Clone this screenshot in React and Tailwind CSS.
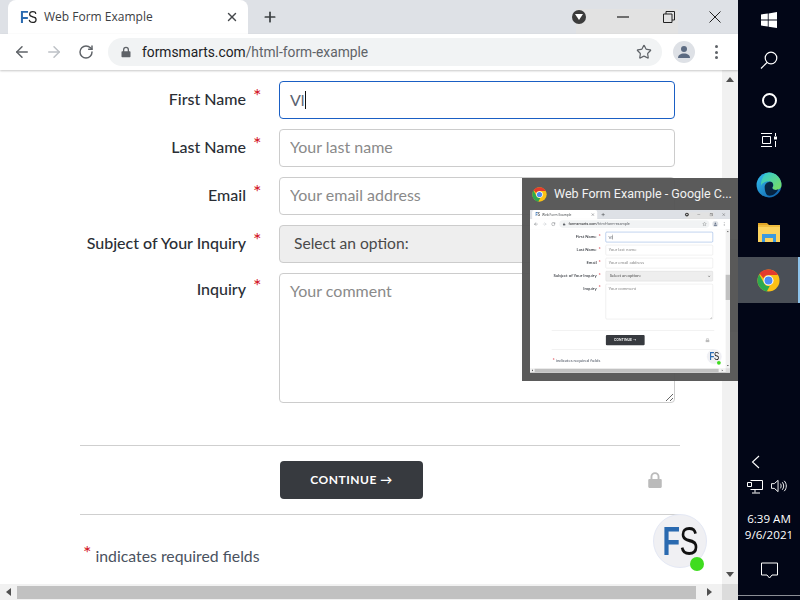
import React from "react";
import { ArrowLeft, ArrowRight, RotateCw, Star, X, Plus } from "lucide-react";

const ChromeLogo = ({ size = 24 }) => (
  <svg width={size} height={size} viewBox="0 0 48 48">
    <circle cx="24" cy="24" r="23" fill="#fbc116" />
    <path d="M24 1a23 23 0 0 1 19.9 11.5H24a11.5 11.5 0 0 0-10.6 7L5.1 9.6A23 23 0 0 1 24 1z" fill="#e33b2e" />
    <path d="M4.6 11.5 14 28a11.5 11.5 0 0 0 12.6 7.3L20.4 46.7A23 23 0 0 1 4.6 11.5z" fill="#2da94f" />
    <circle cx="24" cy="24" r="10.5" fill="#fff" />
    <circle cx="24" cy="24" r="8.3" fill="#4c8bf5" />
  </svg>
);

const EdgeLogo = () => (
  <svg width="26" height="26" viewBox="0 0 48 48">
    <defs>
      <linearGradient id="edgeA" x1="0" y1="0" x2="1" y2="1">
        <stop offset="0" stopColor="#35c1f1" />
        <stop offset="1" stopColor="#0b57a4" />
      </linearGradient>
      <linearGradient id="edgeB" x1="0" y1="0" x2="1" y2="1">
        <stop offset="0" stopColor="#2fc8d8" />
        <stop offset="1" stopColor="#7ce05c" />
      </linearGradient>
    </defs>
    <circle cx="24" cy="24" r="23" fill="url(#edgeA)" />
    <path d="M24 1a23 23 0 0 1 23 23c0 6-5 9-10 9-4 0-7-1.500-7-4 3-2 3-8-2-11-6-3-16 0-19 8C9 13 15 1 24 1z" fill="url(#edgeB)" />
    <path d="M16 28c0-6 5-10 11-10 5 1 6 7 3 11 1 4 6 5 11 3-4 9-13 14-20 11-3-3-5-9-5-15z" fill="#04142c" opacity="0.85" />
  </svg>
);

const FolderIcon = () => (
  <svg width="22" height="22" viewBox="0 0 22 22">
    <path d="M0 2h9l2 2v2H0z" fill="#e0a526" />
    <rect x="0" y="4" width="22" height="17" fill="#fcd35f" />
    <rect x="0" y="4" width="22" height="2" fill="#f0bd3f" />
    <path d="M4 21v-8h14v8h-3v-4H7v4z" fill="#3c9ae0" />
  </svg>
);

const LockIcon = ({ size = 12, color = "#5f6368" }) => (
  <svg width={size} height={size} viewBox="0 0 16 16">
    <path d="M8 1a4 4 0 0 0-4 4v2H3a1 1 0 0 0-1 1v6a1 1 0 0 0 1 1h10a1 1 0 0 0 1-1V8a1 1 0 0 0-1-1h-1V5a4 4 0 0 0-4-4zm-2.300 6V5a2.300 2.300 0 0 1 4.600 0v2z" fill={color} />
  </svg>
);

const Required = () => <span className="text-[#d3121f] text-[20px] leading-none ml-[7px] w-[8px] relative -top-[5px]">*</span>;

const labelCls = "w-[166px] text-right text-[#2a2e35] text-[16px] font-medium whitespace-nowrap relative -top-[1px]";
const fieldCls = "w-[396px] h-[38px] rounded-[4px] border border-[#cccccc] bg-white px-[10px] pb-[3px] text-[16px] outline-none placeholder:text-[#8a8a8a]";

const Row = ({ label, children, top = false }) => (
  <div className={`flex ${top ? "items-start" : "items-center"}`}>
    <div className={`flex ${top ? "pt-[5px]" : ""} items-center w-[199px]`}>
      <span className={labelCls}>{label}</span>
      <Required />
    </div>
    {children}
  </div>
);

const Browser = () => (
  <div className="w-[738px] h-[600px] flex flex-col bg-white shrink-0 overflow-hidden" style={{ fontFamily: "Lato, sans-serif" }}>
    {/* tab strip */}
    <div className="h-[34px] bg-[#dee1e6] flex items-end shrink-0 relative" style={{ fontFamily: "'Open Sans', sans-serif" }}>
      <div className="absolute left-[576px] top-[9px] w-[102px] h-[25px] bg-[#e2e2e2]" />
      <div className="ml-[8px] w-[240px] h-[34px] bg-white rounded-t-[8px] flex items-center pl-[12px] pr-[9px] relative">
        <span className="w-[24px] block">
          <span className="text-[17px] font-bold leading-none tracking-[-0.5px] block origin-left scale-x-[0.82]" style={{ fontFamily: "'Liberation Sans', sans-serif" }}>
            <span className="text-[#2a6ab0]">F</span><span className="text-[#222] font-normal">S</span>
          </span>
        </span>
        <span className="text-[12px] text-[#3c4043] flex-1 whitespace-nowrap">Web Form Example</span>
        <X size={14} strokeWidth={2.4} className="text-[#45484c]" />
      </div>
      <div className="h-[34px] flex items-center ml-[14px]">
        <Plus size={16} strokeWidth={2.6} className="text-[#3c4043]" />
      </div>
      <div className="flex-1" />
      <div className="h-[34px] flex items-center pr-[17px] text-[#222] relative">
        <span className="w-[14px] h-[14px] rounded-full bg-[#3c3c3c] flex items-center justify-center mr-[31px]">
          <svg width="8" height="6" viewBox="0 0 8 6"><path d="M0 0h8L4 6z" fill="#fff" /></svg>
        </span>
        <svg width="12" height="2" viewBox="0 0 12 2" className="mr-[34px]"><path d="M0 1h12" stroke="#222" strokeWidth="1.200" /></svg>
        <svg width="12" height="12" viewBox="0 0 12 12" className="mr-[34px]" fill="none" stroke="#222">
          <path d="M.5 3h8.500v8.500H.5z M3 3V.5h8.500V9H9" />
        </svg>
        <svg width="12" height="12" viewBox="0 0 12 12" stroke="#222" strokeWidth="1"><path d="M.5.500l11 11M11.500.500l-11 11" /></svg>
      </div>
    </div>
    {/* toolbar */}
    <div className="h-[36px] bg-white flex items-center shrink-0 pl-[13px] shadow-[0_1px_2px_rgba(0,0,0,0.22)] z-10 relative" style={{ fontFamily: "Roboto, sans-serif" }}>
      <ArrowLeft size={18} strokeWidth={2} className="text-[#5f6368]" />
      <ArrowRight size={18} strokeWidth={2} className="text-[#bdc1c6] ml-[14px]" />
      <RotateCw size={16} strokeWidth={2.2} className="text-[#5f6368] ml-[15px]" />
      <div className="ml-[14px] w-[554px] h-[28px] rounded-full bg-[#f1f3f4] flex items-center pl-[12px] pr-[10px]">
        <LockIcon size={12} />
        <span className="ml-[10px] text-[13.8px] text-[#202124] flex-1 whitespace-nowrap">
          formsmarts.com<span className="text-[#5f6368]">/html-form-example</span>
        </span>
        <Star size={16} strokeWidth={1.8} className="text-[#5f6368]" />
      </div>
      <div className="ml-[11px] w-[22px] h-[22px] rounded-full bg-[#dee1e6] flex items-center justify-center">
        <svg width="14" height="14" viewBox="0 0 14 14" fill="#5c6b82"><circle cx="7" cy="4" r="3" /><path d="M1 13c0-3 2.500-4.500 6-4.500s6 1.500 6 4.500z" /></svg>
      </div>
      <div className="ml-[20px] flex flex-col gap-[2.500px]">
        <span className="w-[3px] h-[3px] rounded-full bg-[#5f6368]" />
        <span className="w-[3px] h-[3px] rounded-full bg-[#5f6368]" />
        <span className="w-[3px] h-[3px] rounded-full bg-[#5f6368]" />
      </div>
    </div>
    {/* content */}
    <div className="flex-1 flex min-h-0">
      <div className="w-[722px] pl-[80px] pt-[11px] relative">
        <div className="flex flex-col gap-[10px]">
          <Row label="First Name">
            <div className="w-[396px] h-[38px] rounded-[4px] border-[1.5px] border-[#1a5fc4] flex items-center px-[10px] text-[16px] text-[#5a6270]">
              Vl<span className="w-px h-[18px] bg-[#111]" />
            </div>
          </Row>
          <Row label="Last Name"><input className={fieldCls} placeholder="Your last name" readOnly /></Row>
          <Row label="Email"><input className={fieldCls} placeholder="Your email address" readOnly /></Row>
          <Row label="Subject of Your Inquiry">
            <div className="w-[396px] h-[38px] rounded-[4px] border border-[#cccccc] bg-[#eeeeee] flex items-center justify-between pl-[14px] pr-[8px] text-[15.6px] text-[#4a4a4a]">
              Select an option:
              <svg width="10" height="6" viewBox="0 0 10 6" fill="none" stroke="#222" strokeWidth="2"><path d="M1 1l4 4 4-4" /></svg>
            </div>
          </Row>
          <Row label="Inquiry" top>
            <textarea className="w-[396px] h-[130px] rounded-[4px] border border-[#cccccc] bg-white px-[10px] py-[5px] text-[16px] outline-none placeholder:text-[#8a8a8a]" placeholder="Your comment" readOnly />
          </Row>
        </div>
        <div className="w-[600px] h-px bg-[#cfcfcf] mt-[42px]" />
        <div className="w-[600px] h-[68px] flex items-center pl-[200px] pr-[16px] justify-between">
          <button className="w-[143px] h-[38px] rounded-[4px] bg-[#373a3f] text-white text-[12px] font-bold tracking-[0.5px]">CONTINUE →</button>
          <LockIcon size={18} color="#bbbbbb" />
        </div>
        <div className="w-[600px] h-px bg-[#cfcfcf]" />
        <div className="mt-[29px] pl-[3px] flex items-baseline text-[15.8px] text-[#4a5260]">
          <span className="text-[#d3121f] text-[20px] leading-none mr-[4px] relative -top-[2px]">*</span>
          indicates required fields
        </div>
        {/* FS chat badge */}
        <div className="absolute left-[653px] top-[444px] w-[54px] h-[54px] rounded-full bg-[#f0f0f3] border border-[#e4e8f4] flex items-center justify-center" style={{ fontFamily: "'Liberation Sans', sans-serif" }}>
          <span className="text-[41px] leading-none font-bold tracking-[-1px] scale-x-[0.7] whitespace-nowrap">
            <span className="text-[#2a6ab0]">F</span><span className="text-[#111] font-normal">S</span>
          </span>
          <span className="absolute left-[36px] top-[42px] w-[14px] h-[14px] rounded-full bg-[#3fdc1f]" />
        </div>
      </div>
      {/* vertical scrollbar */}
      <div className="w-[16px] bg-[#f1f1f1] flex flex-col items-center pt-[7px] pb-[7px]">
        <svg width="8" height="5" viewBox="0 0 8 5"><path d="M4 0l4 5H0z" fill="#505050" /></svg>
        <div className="w-full h-[93px] bg-[#c1c1c1] mt-[157px]" />
        <div className="flex-1" />
        <svg width="8" height="5" viewBox="0 0 8 5"><path d="M0 0h8L4 5z" fill="#505050" /></svg>
      </div>
    </div>
    {/* horizontal scrollbar */}
    <div className="h-[16px] bg-[#f1f1f1] flex items-center shrink-0">
      <div className="w-[17px] flex justify-center">
        <svg width="5" height="8" viewBox="0 0 5 8"><path d="M5 0v8L0 4z" fill="#505050" /></svg>
      </div>
      <div className="w-[679px] h-[13px] bg-[#c1c1c1]" />
      <div className="flex-1 flex justify-center pl-[1px]">
        <svg width="5" height="8" viewBox="0 0 5 8"><path d="M0 0v8l5-4z" fill="#505050" /></svg>
      </div>
      <div className="w-[16px] h-full bg-[#dcdcdc]" />
    </div>
  </div>
);

const TaskSlot = ({ children, h = "h-[40px]" }) => <div className={`${h} w-full flex items-center justify-center shrink-0`}>{children}</div>;

const Taskbar = () => (
  <div className="w-[62px] h-[600px] bg-[#020617] flex flex-col shrink-0 text-white" style={{ fontFamily: "'Open Sans', sans-serif" }}>
    <TaskSlot><svg width="16" height="16" viewBox="0 0 16 16" fill="#fff"><path d="M0 2.500 6.800 1.500v6H0zM7.600 1.400 16 0v7.500H7.600zM0 8.400h6.800v6L0 13.500zM7.600 8.400H16V16l-8.400-1.300z" /></svg></TaskSlot>
    <TaskSlot><svg width="18" height="18" viewBox="0 0 18 18" fill="none" stroke="#fff" strokeWidth="1.200"><circle cx="11" cy="7" r="5.800" /><path d="M7 11.500 1 17.500" /></svg></TaskSlot>
    <TaskSlot><span className="w-[15px] h-[15px] rounded-full border-[2px] border-white" /></TaskSlot>
    <TaskSlot><svg width="16" height="16" viewBox="0 0 16 16" fill="none" stroke="#fff"><path d="M0 1.500h11M0 14.500h11M1.500 4.500h8v7h-8z" /><path d="M14.500 1v3" strokeWidth="1" /><rect x="13" y="4.500" width="3" height="3" fill="#fff" stroke="none" /><path d="M14.500 9v6" /></svg></TaskSlot>
    <TaskSlot h="h-[50px]"><EdgeLogo /></TaskSlot>
    <TaskSlot h="h-[44px]"><FolderIcon /></TaskSlot>
    <div className="h-[46px] mt-[3px] w-full bg-[#4a4f57] border-r-2 border-[#8ec4ec] flex items-center justify-center shrink-0"><ChromeLogo size={23} /></div>
    <div className="flex-1" />
    <div className="w-[34px] flex justify-center h-[24px] items-center">
      <svg width="9" height="14" viewBox="0 0 9 14" fill="none" stroke="#fff" strokeWidth="1.100"><path d="M8 1 1.500 7 8 13" /></svg>
    </div>
    <div className="flex pl-[9px] gap-[8px] h-[24px] items-center">
      <svg width="16" height="15" viewBox="0 0 16 15" fill="none" stroke="#fff"><path d="M3.500 1.500h12v9h-12M8 10.500v3M5 14h8M.5 3.500h4v4h-4z" /></svg>
      <svg width="16" height="14" viewBox="0 0 17 14" fill="none" stroke="#fff"><path d="M.5 4.500h3L7.500 1v12l-4-3.500h-3zM10 4.500c1 1.500 1 3.500 0 5M12 3c2 2.500 2 5.500 0 8M14 1.500c3 3 3 8 0 11" /></svg>
    </div>
    <div className="mt-[13px] text-[11.6px] leading-[16px] text-center whitespace-nowrap">
      <div>6:39 AM</div>
      <div>9/6/2021</div>
    </div>
    <div className="mt-[19px] h-[19px] flex justify-center">
      <svg width="17" height="17" viewBox="0 0 17 17" fill="none" stroke="#fff"><path d="M.5 1h16v12h-5.500L8.500 16 6 13H.5z" /></svg>
    </div>
    <div className="mt-[14px] h-px bg-[#8b8e96]" />
    <div className="h-[4px]" />
  </div>
);

export default function App() {
  return (
    <div className="w-[800px] h-[600px] flex relative overflow-hidden">
      <Browser />
      <Taskbar />
      {/* taskbar window preview */}
      <div className="absolute left-[522px] top-[178px] w-[216px] h-[203px] bg-[#545454]/[0.96] flex flex-col pl-[8px]">
        <div className="h-[32px] flex items-center text-[#f2f2f2] text-[12.5px] whitespace-nowrap gap-[7px] pl-[2px]" style={{ fontFamily: "Roboto, sans-serif" }}>
          <ChromeLogo size={15} />
          <span>Web Form Example - Google C...</span>
        </div>
        <div className="w-[200px] h-[163px] overflow-hidden relative blur-[0.4px]">
          <div className="absolute left-0 top-0 origin-top-left scale-[0.271]">
            <Browser />
          </div>
        </div>
      </div>
    </div>
  );
}
